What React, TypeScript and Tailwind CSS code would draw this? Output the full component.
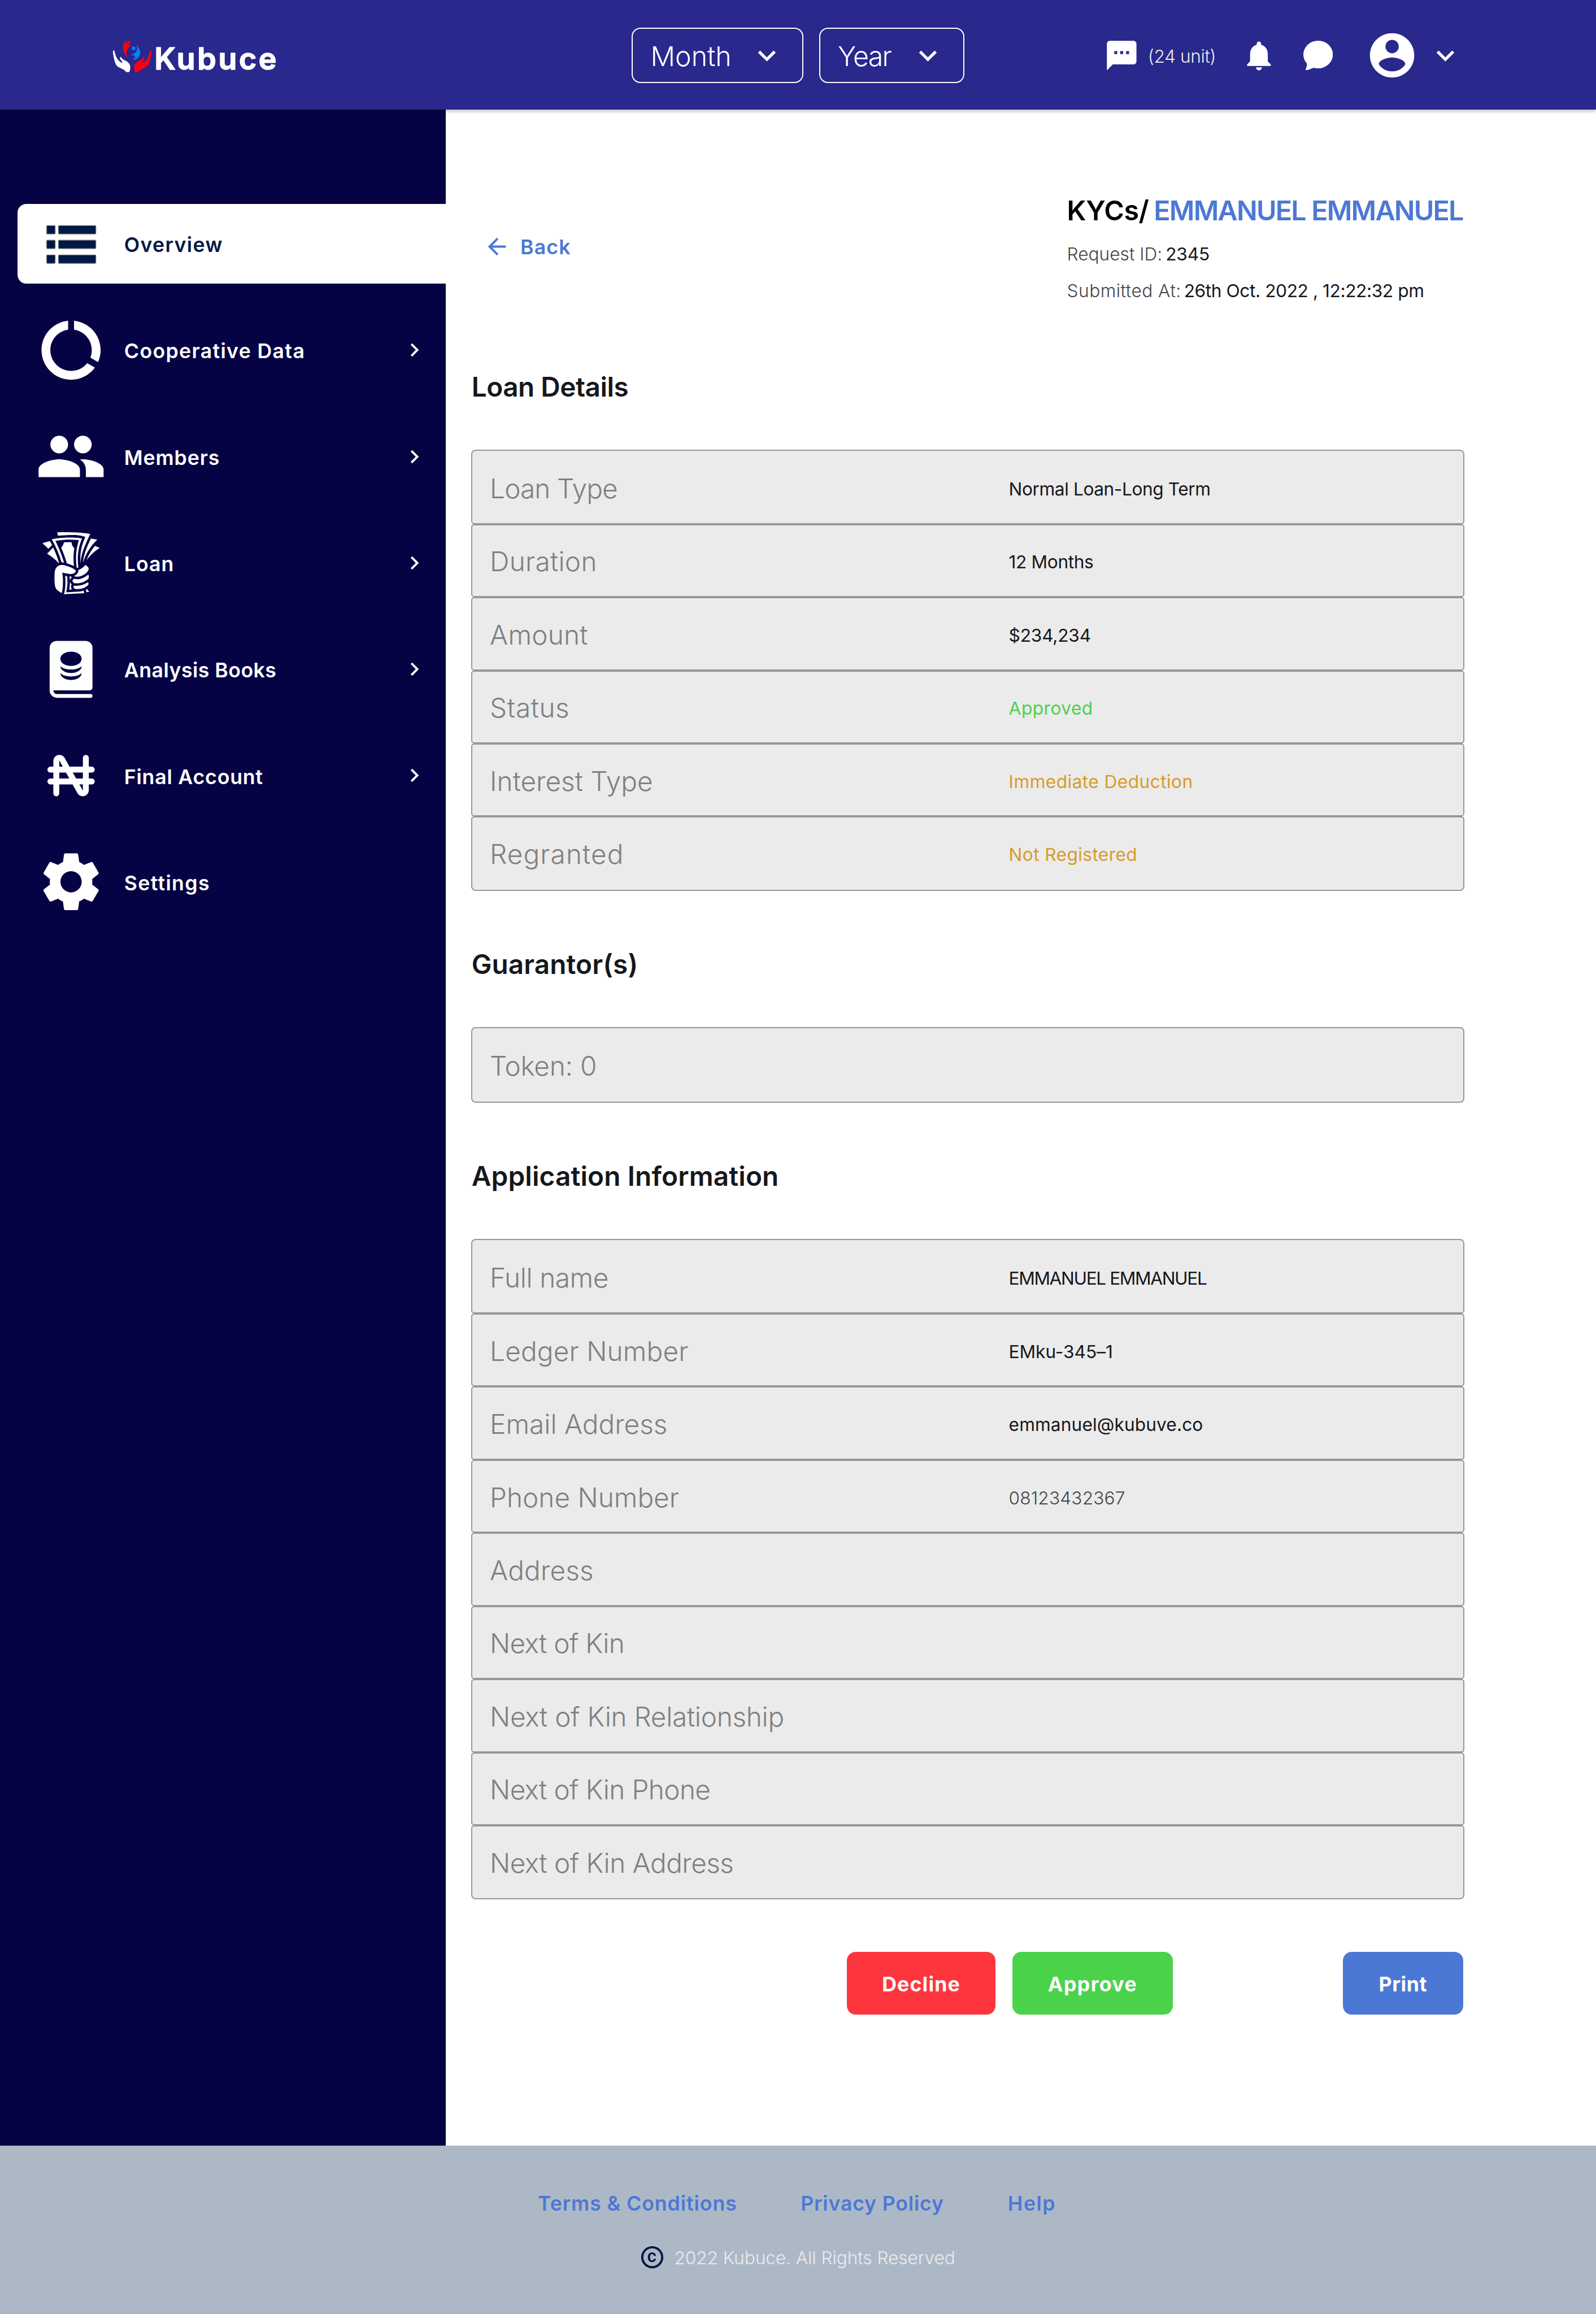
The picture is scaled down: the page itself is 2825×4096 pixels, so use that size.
import type { ReactNode } from "react";
import { GiTakeMyMoney } from "react-icons/gi";
import { MdCopyright, MdNotifications, MdSettings, MdSms } from "react-icons/md";
import { TbCurrencyNaira } from "react-icons/tb";

function Glyph({ d, className }: { d: string; className: string }) {
  return (
    <svg viewBox="0 0 24 24" fill="currentColor" className={`shrink-0 ${className}`}>
      <path d={d} />
    </svg>
  );
}

const EXPAND = "M16.59 8.59L12 13.17 7.41 8.59 6 10l6 6 6-6z";
const NEXT = "M10 6L8.59 7.41 13.17 12l-4.58 4.59L10 18l6-6z";
const BACK = "M20 11H7.83l5.59-5.59L12 4l-8 8 8 8 1.41-1.41L7.83 13H20v-2z";
const ACCOUNT =
  "M12 2C6.48 2 2 6.48 2 12s4.48 10 10 10 10-4.48 10-10S17.52 2 12 2zm0 3c1.66 0 3 1.34 3 3s-1.34 3-3 3-3-1.34-3-3 1.34-3 3-3zm0 14.2a7.2 7.2 0 0 1-6-3.22c.03-1.99 4-3.08 6-3.08 1.99 0 5.97 1.09 6 3.08a7.2 7.2 0 0 1-6 3.22z";
const DATA_USAGE =
  "M13 2.05v3.03c3.39.49 6 3.39 6 6.92 0 .9-.18 1.75-.48 2.54l2.6 1.53c.56-1.24.88-2.62.88-4.07 0-5.18-3.95-9.45-9-9.95zM12 19c-3.87 0-7-3.13-7-7 0-3.53 2.61-6.43 6-6.92V2.05c-5.06.5-9 4.76-9 9.95 0 5.52 4.47 10 9.99 10 3.31 0 6.24-1.61 8.06-4.09l-2.6-1.53A6.95 6.95 0 0 1 12 19z";
const PEOPLE =
  "M16 11c1.66 0 2.99-1.34 2.99-3S17.66 5 16 5c-1.66 0-3 1.34-3 3s1.34 3 3 3zm-8 0c1.66 0 2.99-1.34 2.99-3S9.66 5 8 5C6.34 5 5 6.34 5 8s1.34 3 3 3zm0 2c-2.33 0-7 1.17-7 3.5V19h14v-2.5c0-2.33-4.67-3.5-7-3.5zm8 0c-.29 0-.62.02-.97.05 1.16.84 1.97 1.97 1.97 3.45V19h6v-2.5c0-2.33-4.67-3.5-7-3.5z";

const HAND =
  "M78 175Q80 168 84 168Q89 169 91 178C97 200 105 232 122 248C134 262 146 270 153 268Q155 262 147 253Q134 238 134 230Q136 220 144 224C150 236 166 247 185 255C203 264 216 280 219 300Q220 325 211 345H184C180 330 150 318 130 308C102 296 95 270 88 240C82 215 78 195 78 175z";

function Logo() {
  return (
    <svg viewBox="300 90 470 120" className="ml-[196px] h-[78.5px] w-[307.3px] shrink-0 overflow-visible">
      <defs>
        <clipPath id="logo-clip">
          <rect x="60" y="93" width="360" height="252" />
        </clipPath>
      </defs>
      <g transform="translate(280 80) scale(.33333)">
        <g clipPath="url(#logo-clip)">
          <path d={HAND} fill="#fff" />
          <path d={HAND} fill="#ff0010" transform="translate(469 0) scale(-1 1)" />
          <path
            d="M176 93H184Q186 112 200 122Q214 128 232 126C205 142 185 160 188 192Q189 212 192 228C178 205 160 180 160 148Q161 115 176 93z"
            fill="#ff0010"
          />
          <circle cx="208" cy="101" r="15" fill="#ff0010" />
          <circle cx="246" cy="152" r="15" fill="#0a7cff" />
          <path
            d="M272 125C285 145 299 160 299 190C297 225 270 242 241 248Q258 228 257 215Q250 206 223 206C250 198 272 182 274 155Q275 140 272 125z"
            fill="#0a7cff"
          />
        </g>
      </g>
      <text
        x="418"
        y="188.5"
        fontSize="82"
        fontWeight="600"
        fill="#fff"
        stroke="#fff"
        strokeWidth="2.5"
        strokeLinejoin="round"
        textLength="331"
        lengthAdjust="spacing"
      >
        Kubuce
      </text>
    </svg>
  );
}

function ListIcon() {
  return (
    <svg viewBox="0 0 192 192" fill="#001845" stroke="#6f7276" strokeWidth="2" className="size-[125.6px]">
      {[46.5, 86, 126].map((y) => (
        <g key={y}>
          <rect x="30" y={y} width="23" height="22.5" rx="2" />
          <rect x="62" y={y} width="101" height="22.5" rx="2" />
        </g>
      ))}
    </svg>
  );
}

function BookDatabaseIcon() {
  return (
    <svg viewBox="0 0 192 192" className="size-[125.6px]">
      <path
        fill="#fff"
        fillRule="evenodd"
        d="M38 38a19 19 0 0 1 19-19h78a19 19 0 0 1 19 19V145a8 8 0 0 1-8 8H48a10 10 0 0 0 10 10h91a5 5 0 0 1 0 10H58a20 20 0 0 1-20-20zM96 48C79 48 67 56.500 67 67.400S79 86.800 96 86.800S124.600 78.300 124.600 67.400S113 48 96 48zM67 87C72 93 84 96.300 96 96.300S119.600 93 124.600 87C124.600 98 112 105.800 96 105.800S67 98 67 87zM67 106C72 112 84 115.300 96 115.300S119.600 112 124.600 106C124.600 117 112 124.800 96 124.800S67 117 67 106z"
      />
    </svg>
  );
}

function Select({ label, className }: { label: string; className: string }) {
  return (
    <div
      className={`flex h-[98px] shrink-0 items-center justify-between rounded-[15.7px] border-2 border-white pr-[31.4px] pl-[31.4px] text-[48.4px] font-light ${className}`}
    >
      <span className="pt-[5px] leading-none">{label}</span>
      <Glyph d={EXPAND} className="size-[62.8px]" />
    </div>
  );
}

function Header() {
  return (
    <header className="relative z-10 h-[194px] w-full bg-[#29288d] text-white shadow-[0_4px_5px_rgba(0,0,0,0.2)]">
      <div className="flex h-[196px] items-center">
        <Logo />
        <Select label="Month" className="ml-[614.9px] w-[304px] tracking-[-0.002em]" />
        <Select label="Year" className="ml-[27.5px] w-[257px] tracking-[-0.035em]" />
        <MdSms className="ml-[247.3px] size-[62.8px] shrink-0" />
        <span className="w-[180.5px] shrink-0 pt-[3px] pl-[15px] text-[31.7px] leading-none font-light tracking-[-0.013em] text-[#ebebeb]">
          (24 unit)
        </span>
        <MdNotifications className="size-[62.8px] shrink-0" />
        <svg viewBox="0 0 80 80" fill="currentColor" className="ml-[47.1px] size-[52.3px] shrink-0">
          <ellipse cx="40" cy="37.5" rx="40" ry="37.5" />
          <path d="M9.700 61.500C9.500 70 8 73 6 78.300Q5.600 80 7.500 80C14 79.500 21 76 28.300 73L30 60L12 56z" />
        </svg>
        <Glyph d={ACCOUNT} className="ml-[57.5px] size-[94.2px]" />
        <Glyph d={EXPAND} className="ml-[15.7px] size-[62.8px]" />
      </div>
    </header>
  );
}

type NavItem = { label: string; icon: ReactNode; active?: boolean; arrow?: boolean; tracking: string };

const NAV: NavItem[] = [
  { label: "Overview", icon: <ListIcon />, active: true, tracking: "tracking-[0.037em]" },
  {
    label: "Cooperative Data",
    icon: <Glyph d={DATA_USAGE} className="size-[125.6px]" />,
    arrow: true,
    tracking: "tracking-[0.037em]",
  },
  {
    label: "Members",
    icon: <Glyph d={PEOPLE} className="size-[125.6px]" />,
    arrow: true,
    tracking: "tracking-[0.025em]",
  },
  { label: "Loan", icon: <GiTakeMyMoney className="size-[125.6px]" />, arrow: true, tracking: "tracking-[0.028em]" },
  { label: "Analysis Books", icon: <BookDatabaseIcon />, arrow: true, tracking: "tracking-[0.0125em]" },
  {
    label: "Final Account",
    icon: <TbCurrencyNaira className="size-[125.6px]" />,
    arrow: true,
    tracking: "tracking-[0.0215em]",
  },
  { label: "Settings", icon: <MdSettings className="size-[125.6px]" />, tracking: "tracking-[0.037em]" },
];

function Sidebar() {
  return (
    <nav className="flex w-[788.6px] shrink-0 flex-col gap-[47.1px] bg-[#050344] pt-[166.9px] pl-[31.4px]">
      {NAV.map((item) => (
        <div
          key={item.label}
          className={`flex h-[141.2px] items-center rounded-l-[15.7px] pr-[31.4px] pl-[31.4px] ${
            item.active ? "bg-white text-[#001845]" : "text-white"
          }`}
        >
          <span className="flex w-[125.6px] shrink-0 justify-center">{item.icon}</span>
          <span className={`ml-[31.4px] flex-1 pt-[5px] text-[35.7px] leading-none font-semibold ${item.tracking}`}>
            {item.label}
          </span>
          {item.arrow && <Glyph d={NEXT} className="size-[47.1px]" />}
        </div>
      ))}
    </nav>
  );
}

type Row = { label: string; lt?: string; value?: string; vt?: string };

const LOAN: Row[] = [
  { label: "Loan Type", lt: "tracking-[-0.018em]", value: "Normal Loan-Long Term", vt: "tracking-[-0.014em]" },
  { label: "Duration", lt: "tracking-[0.006em]", value: "12 Months", vt: "tracking-[-0.012em]" },
  { label: "Amount", lt: "tracking-[0.004em]", value: "$234,234", vt: "tracking-[-0.007em]" },
  { label: "Status", lt: "tracking-[0.012em]", value: "Approved", vt: "tracking-[0.014em] text-[#4bd14a]" },
  {
    label: "Interest Type",
    value: "Immediate Deduction",
    vt: "tracking-[0.013em] text-[#d79b2b]",
  },
  { label: "Regranted", lt: "tracking-[0.023em]", value: "Not Registered", vt: "tracking-[0.012em] text-[#d79b2b]" },
];

const TOKEN: Row[] = [{ label: "Token: 0", lt: "tracking-[-0.005em]" }];

const APPLICATION: Row[] = [
  { label: "Full name", lt: "tracking-[-0.009em]", value: "EMMANUEL EMMANUEL", vt: "tracking-[-0.045em]" },
  { label: "Ledger Number", lt: "tracking-[0.003em]", value: "EMku-345–1", vt: "tracking-[-0.002em]" },
  { label: "Email Address", value: "emmanuel@kubuve.co", vt: "tracking-[0.003em]" },
  { label: "Phone Number", value: "08123432367", vt: "tracking-[0.004em] font-light text-[#444449]" },
  { label: "Address", lt: "tracking-[0.004em]" },
  { label: "Next of Kin", lt: "tracking-[-0.014em]" },
  { label: "Next of Kin Relationship", lt: "tracking-[-0.006em]" },
  { label: "Next of Kin Phone", lt: "tracking-[-0.013em]" },
  { label: "Next of Kin Address", lt: "tracking-[-0.011em]" },
];

function Section({ title, rows, tracking, className }: { title: string; rows: Row[]; tracking: string; className: string }) {
  const last = rows.length - 1;
  return (
    <section className={className}>
      <h2 className={`flex h-[52.3px] items-center text-[47.7px] leading-none font-semibold ${tracking}`}>
        <span className="pt-[2px] pl-[1px]">{title}</span>
      </h2>
      <div className="mt-[85.2px] flex flex-col">
        {rows.map((row, i) => {
          const size =
            last === 0
              ? "h-[133.4px] rounded-[8px] pt-[6px]"
              : i === 0
                ? "h-[131.44px] rounded-t-[8px] rounded-b-[5px] pt-[8px]"
                : i === last
                  ? "h-[131.44px] rounded-t-[5px] rounded-b-[8px] pt-[4px]"
                  : "h-[129.48px] rounded-[5px] pt-[6px]";
          return (
            <div
              key={row.label}
              className={`flex items-center border-2 border-[#979797] bg-[#ebebeb] pl-[31.4px] leading-none ${size}`}
            >
              <span className={`w-[918.5px] shrink-0 text-[47.7px] font-light text-[#808080] ${row.lt ?? ""}`}>
                {row.label}
              </span>
              <span className={`text-[31.7px] ${row.vt ?? ""}`}>{row.value}</span>
            </div>
          );
        })}
      </div>
    </section>
  );
}

function Button({ label, className }: { label: string; className: string }) {
  return (
    <button
      className={`flex h-[111.5px] items-center justify-center rounded-[15.7px] pt-[4px] text-[35.7px] leading-none font-bold text-white ${className}`}
    >
      {label}
    </button>
  );
}

function Main() {
  return (
    <main className="w-[1803px] shrink-0 pt-[140.3px] pl-[45.1px] text-[#16171b]">
      <div className="flex h-[206.6px] items-center justify-between">
        <a className="flex items-center pl-[22.2px] text-[#4c78d5]">
          <Glyph d={BACK} className="mb-[3px] size-[47.1px]" />
          <span className="ml-[18px] pt-[1px] text-[35.7px] leading-none font-semibold tracking-[0.033em]">Back</span>
        </a>
        <div className="flex w-[703px] flex-col leading-none whitespace-nowrap">
          <div className="flex h-[76.5px] items-center pt-[2px] text-[48.4px] font-semibold">
            <span className="tracking-[-0.01em] text-black">KYCs/</span>
            <span className="ml-[9px] tracking-[-0.037em] text-[#4c78d5]">EMMANUEL EMMANUEL</span>
          </div>
          <div className="flex h-[76.5px] items-center pt-[2px] text-[31.7px]">
            <span className="font-light tracking-[-0.001em] text-[#444449]">Request ID:</span>
            <span className="ml-[6px] tracking-[-0.0055em]">2345</span>
          </div>
          <div className="flex h-[53.6px] items-center pt-[1px] text-[31.7px]">
            <span className="font-light tracking-[0.014em] text-[#444449]">Submitted At:</span>
            <span className="ml-[5px] tracking-[-0.0135em]">26th Oct. 2022 , 12:22:32 pm</span>
          </div>
        </div>
      </div>
      <Section title="Loan Details" rows={LOAN} tracking="tracking-[-0.01em]" className="mt-[117.8px]" />
      <Section title="Guarantor(s)" rows={TOKEN} tracking="tracking-[0.002em]" className="mt-[104px]" />
      <Section title="Application Information" rows={APPLICATION} tracking="tracking-[0.003em]" className="mt-[104px]" />
      <div className="mt-[92.2px] flex justify-end pr-[2px]">
        <Button label="Decline" className="w-[263.7px] bg-[#ff353e] tracking-[0.032em]" />
        <Button label="Approve" className="ml-[30px] w-[283.2px] bg-[#4bd24b] tracking-[0.039em]" />
        <Button label="Print" className="ml-[301.5px] w-[212.5px] bg-[#4c78d5] tracking-[0.016em]" />
      </div>
    </main>
  );
}

function Footer() {
  return (
    <footer className="h-[298px] w-full shrink-0 bg-[#adb8c7] pt-[76.4px] leading-none">
      <div className="flex h-[52.3px] items-center pt-[1px] pl-[952px] text-[35.7px] font-semibold text-[#4c78d5]">
        <a className="tracking-[0.0254em]">Terms &amp; Conditions</a>
        <a className="ml-[112.5px] tracking-[0.0225em]">Privacy Policy</a>
        <a className="ml-[113px] tracking-[0.041em]">Help</a>
      </div>
      <div className="mt-[44.9px] flex items-center pl-[1131.3px]">
        <MdCopyright className="size-[47.1px] text-[#001845]" />
        <span className="ml-[15px] pt-[3px] text-[31.7px] font-light tracking-[-0.003em] text-[#ebebeb]">
          2022 Kubuce. All Rights Reserved
        </span>
      </div>
    </footer>
  );
}

export default function App() {
  return (
    <div className="flex h-[4096px] w-[2825px] flex-col overflow-hidden bg-white font-['Inter',sans-serif]">
      <Header />
      <div className="flex h-[3604px] shrink-0">
        <Sidebar />
        <Main />
      </div>
      <Footer />
    </div>
  );
}
